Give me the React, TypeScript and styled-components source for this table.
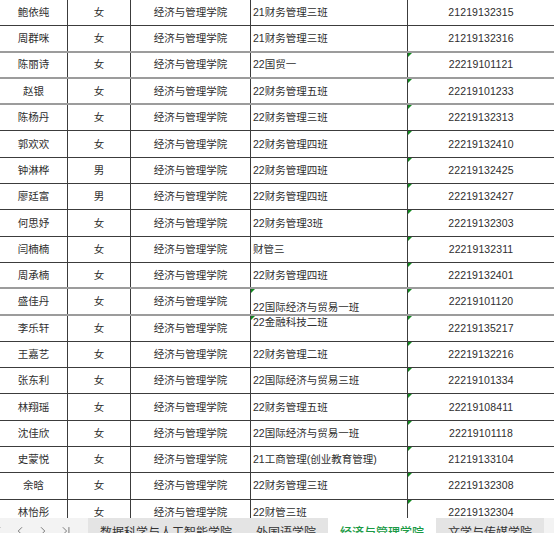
import React from "react";
import styled, { createGlobalStyle } from "styled-components";
import { ChevronFirst, ChevronLeft, ChevronRight, ChevronLast } from "lucide-react";

const GlobalStyle = createGlobalStyle`
  html, body { margin: 0; padding: 0; background: #ffffff; overflow: hidden; }
  * { box-sizing: border-box; }
`;

const Page = styled.div`
  width: 554px;
  height: 533px;
  display: flex;
  flex-direction: column;
  overflow: hidden;
  font-family: "Liberation Sans", "Noto Sans CJK SC", sans-serif;
  color: #2e2e2e;
`;

const Sheet = styled.div`
  height: 518px;
  flex: none;
  overflow: hidden;
`;

const Row = styled.div<{ $soft?: boolean }>`
  display: grid;
  grid-template-columns: 68px 63px 120px 157px 1fr;
  height: 26.3px;
  border-bottom: ${(p) => (p.$soft ? "2px solid #9c9c9c" : "1px solid #3c3c3c")};
`;

const Cell = styled.div<{ $align?: "center" | "left"; $v?: "center" | "top" | "bottom"; $last?: boolean }>`
  position: relative;
  display: flex;
  align-items: ${(p) => (p.$v === "top" ? "flex-start" : p.$v === "bottom" ? "flex-end" : "center")};
  justify-content: ${(p) => (p.$align === "left" ? "flex-start" : "center")};
  padding-left: ${(p) => (p.$align === "left" ? "2px" : "0")};
  border-right: ${(p) => (p.$last ? "none" : "1px solid #3c3c3c")};
  font-size: 10.5px;
  line-height: 13px;
  white-space: nowrap;
  overflow: hidden;
`;

const IdText = styled.span`
  font-family: "Liberation Sans", sans-serif;
  font-size: 10.5px;
  letter-spacing: 0.1px;
`;

const Mark = styled.span`
  position: absolute;
  left: 0;
  top: 0;
  width: 0;
  height: 0;
  border-top: 4px solid #11881f;
  border-right: 4px solid transparent;
`;

const TabBar = styled.div`
  height: 26px;
  flex: none;
  display: flex;
  align-items: stretch;
  background: #f3f3f3;
`;

const Nav = styled.div`
  width: 98px;
  margin-left: -10px;
  display: flex;
  align-items: center;
  gap: 9px;
  color: #555555;
`;

const Tab = styled.div<{ $active?: boolean }>`
  display: flex;
  align-items: center;
  padding: 0 12px;
  font-family: "Noto Sans CJK SC", sans-serif;
  font-size: 12px;
  background: ${(p) => (p.$active ? "#ffffff" : "#e4e4e4")};
  color: ${(p) => (p.$active ? "#1a9a45" : "#333333")};
  font-weight: ${(p) => (p.$active ? 500 : 400)};
  white-space: nowrap;
`;

type Student = {
  name: string;
  sex: string;
  cls: string;
  id: string;
  soft?: boolean;
  clsV?: "top" | "bottom";
  clsMark?: boolean;
  idMark?: boolean;
};

const students: Student[] = [
  { name: "鲍依纯", sex: "女", cls: "21财务管理三班", id: "21219132315" },
  { name: "周群咪", sex: "女", cls: "21财务管理三班", id: "21219132316", soft: true },
  { name: "陈丽诗", sex: "女", cls: "22国贸一", id: "22219101121", soft: true, idMark: true },
  { name: "赵银", sex: "女", cls: "22财务管理五班", id: "22219101233", soft: true, idMark: true },
  { name: "陈杨丹", sex: "女", cls: "22财务管理三班", id: "22219132313", idMark: true },
  { name: "郭欢欢", sex: "女", cls: "22财务管理四班", id: "22219132410", idMark: true },
  { name: "钟淋桦", sex: "男", cls: "22财务管理四班", id: "22219132425", idMark: true },
  { name: "廖廷富", sex: "男", cls: "22财务管理四班", id: "22219132427", idMark: true },
  { name: "何思妤", sex: "女", cls: "22财务管理3班", id: "22219132303", idMark: true },
  { name: "闫楠楠", sex: "女", cls: "财管三", id: "22219132311", idMark: true },
  { name: "周承楠", sex: "女", cls: "22财务管理四班", id: "22219132401", soft: true, idMark: true },
  { name: "盛佳丹", sex: "女", cls: "22国际经济与贸易一班", id: "22219101120", soft: true, clsV: "bottom", clsMark: true, idMark: true },
  { name: "李乐轩", sex: "女", cls: "22金融科技二班", id: "22219135217", clsV: "top", clsMark: true, idMark: true },
  { name: "王嘉艺", sex: "女", cls: "22财务管理二班", id: "22219132216", idMark: true },
  { name: "张东利", sex: "女", cls: "22国际经济与贸易三班", id: "22219101334", idMark: true },
  { name: "林翔瑶", sex: "女", cls: "22财务管理五班", id: "22219108411", idMark: true },
  { name: "沈佳欣", sex: "女", cls: "22国际经济与贸易一班", id: "22219101118", idMark: true },
  { name: "史蒙悦", sex: "女", cls: "21工商管理(创业教育管理)", id: "21219133104", idMark: true },
  { name: "余晗", sex: "女", cls: "22财务管理三班", id: "22219132308", idMark: true },
  { name: "林怡彤", sex: "女", cls: "22财管三班", id: "22219132304", idMark: true },
];

const tabs = ["数据科学与人工智能学院", "外国语学院", "经济与管理学院", "文学与传媒学院"];

export default function App() {
  return (
    <>
      <GlobalStyle />
      <Page>
        <Sheet>
          {students.map((s) => (
            <Row key={s.id} $soft={s.soft}>
              <Cell>{s.name}</Cell>
              <Cell>{s.sex}</Cell>
              <Cell>经济与管理学院</Cell>
              <Cell $align="left" $v={s.clsV}>
                {s.clsMark && <Mark />}
                {s.cls}
              </Cell>
              <Cell $last>
                {s.idMark && <Mark />}
                <IdText>{s.id}</IdText>
              </Cell>
            </Row>
          ))}
        </Sheet>
        <TabBar>
          <Nav>
            <ChevronFirst size={14} strokeWidth={1.3} />
            <ChevronLeft size={14} strokeWidth={1.3} />
            <ChevronRight size={14} strokeWidth={1.3} />
            <ChevronLast size={14} strokeWidth={1.3} />
          </Nav>
          {tabs.map((t) => (
            <Tab key={t} $active={t === "经济与管理学院"}>
              {t}
            </Tab>
          ))}
        </TabBar>
      </Page>
    </>
  );
}
